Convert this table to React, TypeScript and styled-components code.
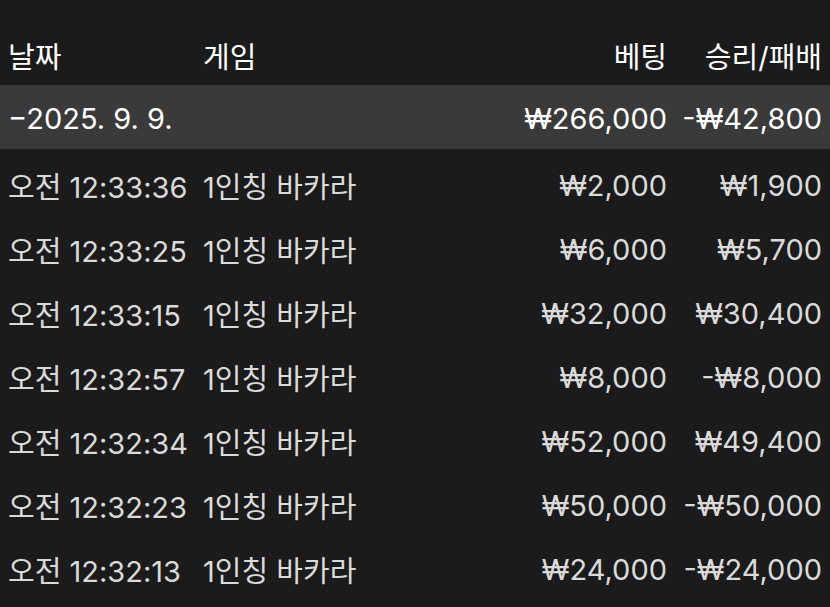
import React from "react";
import styled, { createGlobalStyle } from "styled-components";

const GlobalStyle = createGlobalStyle`
  html, body {
    margin: 0;
    padding: 0;
    background: #1b1b1b;
  }
  body {
    font-family: Inter, "Noto Sans CJK KR", sans-serif;
  }
`;

const Table = styled.div`
  width: 830px;
  height: 607px;
  background: #1b1b1b;
  overflow: hidden;
`;

const pad = { head: "24px", group: "2px", item: "8px" };

const Row = styled.div<{ $variant: "head" | "group" | "item" }>`
  display: grid;
  grid-template-columns: 195px 1fr 160px 155px;
  align-items: center;
  padding: ${(p) => pad[p.$variant]} 8px 0;
  height: ${(p) => (p.$variant === "head" ? "85px" : "64px")};
  box-sizing: border-box;
  background: ${(p) => (p.$variant === "group" ? "#3a3a3a" : "transparent")};
  color: ${(p) => (p.$variant === "item" ? "#dadada" : "#ffffff")};
  font-size: 29px;
  white-space: nowrap;
`;

const Cell = styled.div<{ $right?: boolean }>`
  text-align: ${(p) => (p.$right ? "right" : "left")};
`;

const rows = [
  ["오전 12:33:36", "₩2,000", "₩1,900"],
  ["오전 12:33:25", "₩6,000", "₩5,700"],
  ["오전 12:33:15", "₩32,000", "₩30,400"],
  ["오전 12:32:57", "₩8,000", "-₩8,000"],
  ["오전 12:32:34", "₩52,000", "₩49,400"],
  ["오전 12:32:23", "₩50,000", "-₩50,000"],
  ["오전 12:32:13", "₩24,000", "-₩24,000"],
];

export default function App() {
  return (
    <>
      <GlobalStyle />
      <Table>
        <Row $variant="head">
          <Cell>날짜</Cell>
          <Cell>게임</Cell>
          <Cell $right>베팅</Cell>
          <Cell $right>승리/패배</Cell>
        </Row>
        <Row $variant="group">
          <Cell>−2025. 9. 9.</Cell>
          <Cell />
          <Cell $right>₩266,000</Cell>
          <Cell $right>-₩42,800</Cell>
        </Row>
        {rows.map(([time, bet, win]) => (
          <Row $variant="item" key={time}>
            <Cell>{time}</Cell>
            <Cell>1인칭 바카라</Cell>
            <Cell $right>{bet}</Cell>
            <Cell $right>{win}</Cell>
          </Row>
        ))}
      </Table>
    </>
  );
}
